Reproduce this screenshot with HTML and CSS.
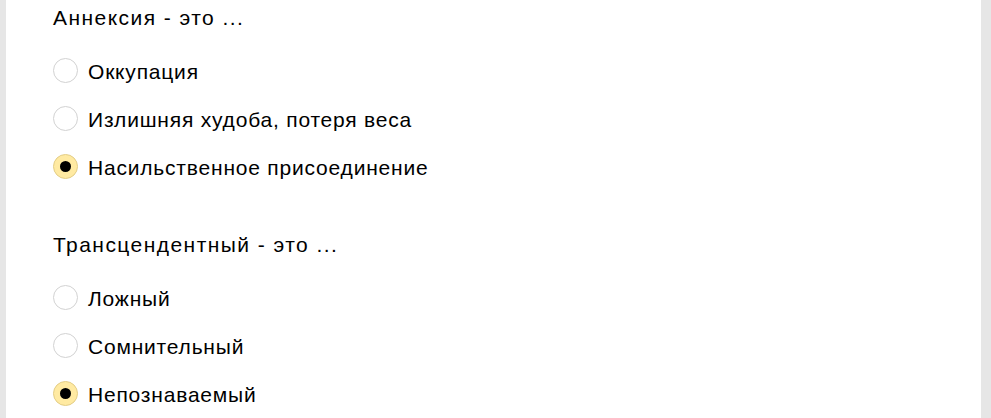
FILE: index.html
```html
<!DOCTYPE html>
<html lang="ru">
<head>
<meta charset="utf-8">
<title>Тест</title>
<link rel="stylesheet" href="styles.css">
</head>
<body>
<main class="page">
  <section class="question">
    <div class="question-title">Аннексия - это ...</div>
    <div class="options">
      <label class="option"><span class="radio"></span><span class="option-text">Оккупация</span></label>
      <label class="option"><span class="radio"></span><span class="option-text">Излишняя худоба, потеря веса</span></label>
      <label class="option"><span class="radio radio-checked"></span><span class="option-text">Насильственное присоединение</span></label>
    </div>
  </section>
  <section class="question">
    <div class="question-title">Трансцендентный - это ...</div>
    <div class="options">
      <label class="option"><span class="radio"></span><span class="option-text">Ложный</span></label>
      <label class="option"><span class="radio"></span><span class="option-text">Сомнительный</span></label>
      <label class="option"><span class="radio radio-checked"></span><span class="option-text">Непознаваемый</span></label>
    </div>
  </section>
</main>
</body>
</html>
```

FILE: styles.css
```css
html, body {
  margin: 0;
  padding: 0;
  height: 100%;
  overflow: hidden;
}

body {
  background: #e6e6e6;
  font-family: "Liberation Sans", Arial, sans-serif;
  color: #000;
}

.page {
  margin-left: 6px;
  width: 975px;
  min-height: 418px;
  box-sizing: border-box;
  background: #fff;
  padding: 6px 0 0 47px;
}

.question {
  margin-bottom: 41px;
}

.question-title {
  font-size: 21px;
  line-height: 24px;
  letter-spacing: 1.45px;
}

.options {
  margin-top: 18px;
  display: flex;
  flex-direction: column;
}

.option {
  display: flex;
  align-items: center;
  gap: 10px;
  height: 48px;
  font-size: 21px;
  line-height: 24px;
  letter-spacing: 0.8px;
}

.radio {
  flex: none;
  box-sizing: border-box;
  width: 25px;
  height: 25px;
  border-radius: 50%;
  border: 1px solid #d2d2d2;
  background: #fff;
  margin-bottom: 3px;
  display: flex;
  align-items: center;
  justify-content: center;
}

.radio-checked {
  background: #ffeaa2;
  border-color: #e3cd86;
}

.radio-checked::after {
  content: "";
  width: 11px;
  height: 11px;
  border-radius: 50%;
  background: #000;
}

.option-text {
  white-space: nowrap;
}
```
